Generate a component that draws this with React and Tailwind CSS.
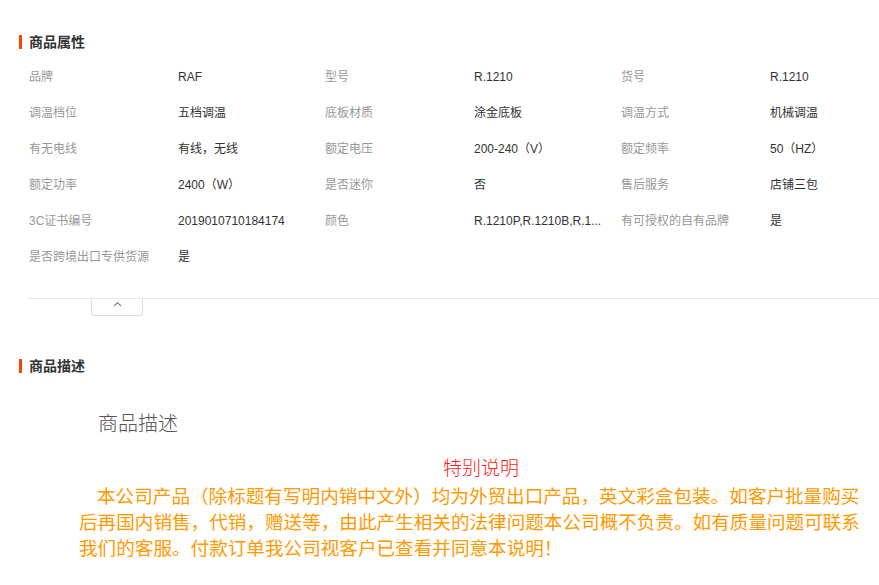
import React from "react";

const rows = [
  [["品牌", "RAF"], ["型号", "R.1210"], ["货号", "R.1210"]],
  [["调温档位", "五档调温"], ["底板材质", "涂金底板"], ["调温方式", "机械调温"]],
  [["有无电线", "有线，无线"], ["额定电压", "200-240（V）"], ["额定频率", "50（HZ）"]],
  [["额定功率", "2400（W）"], ["是否迷你", "否"], ["售后服务", "店铺三包"]],
  [["3C证书编号", "2019010710184174"], ["颜色", "R.1210P,R.1210B,R.1..."], ["有可授权的自有品牌", "是"]],
  [["是否跨境出口专供货源", "是"]],
];

const SectionTitle = ({ children }) => (
  <div className="flex items-center h-4 pl-[19px]">
    <span className="w-[3px] h-[14px] bg-[#ff4400]" />
    <span className="ml-[7px] text-[14px] font-bold text-[#333] leading-4">{children}</span>
  </div>
);

const App = () => {
  return (
    <div
      className="w-[879px] h-[585px] overflow-hidden bg-white"
      style={{ fontFamily: '"Liberation Sans", "Noto Sans CJK SC", sans-serif' }}
    >
      <div className="pt-[34px]">
        <SectionTitle>商品属性</SectionTitle>
      </div>

      <div className="mt-[9px] pl-[29px] overflow-hidden">
        {rows.map((row, i) => (
          <div key={i} className="flex h-9 items-center text-[12px]">
            {row.map(([label, value], j) => (
              <div key={j} className="flex shrink-0 w-[296px]">
                <span className="shrink-0 w-[149px] text-[#999]">{label}</span>
                <span className="shrink-0 w-[130px] whitespace-nowrap text-[#333]">{value}</span>
              </div>
            ))}
          </div>
        ))}
      </div>

      <div className="mt-[23px] ml-[29px] border-t border-[#e5e5e5]">
        <div className="ml-[62px] w-[52px] h-[17px] border border-t-0 border-[#ddd] rounded-b-[3px] flex justify-center pt-[2px]">
          <svg width="9" height="6" viewBox="0 0 9 6" fill="none">
            <polyline points="1,5 4.5,1.5 8,5" stroke="#888" strokeWidth="1.2" />
          </svg>
        </div>
      </div>

      <div className="mt-[42px]">
        <SectionTitle>商品描述</SectionTitle>
      </div>

      <div className="mt-[36px] ml-[98px] text-[20px] leading-7 font-light text-[#555]">商品描述</div>

      <div className="mt-[17px] ml-[443px] text-[19px] leading-7 font-light text-[#ff1a1a]">特别说明</div>

      <p className="mt-px ml-[79px] w-[790px] indent-[18px] text-[18.6px] leading-[26px] text-[#ff9900]">
        本公司产品（除标题有写明内销中文外）均为外贸出口产品，英文彩盒包装。如客户批量购买后再国内销售，代销，赠送等，由此产生相关的法律问题本公司概不负责。如有质量问题可联系我们的客服。付款订单我公司视客户已查看并同意本说明！
      </p>
    </div>
  );
};

export default App;
